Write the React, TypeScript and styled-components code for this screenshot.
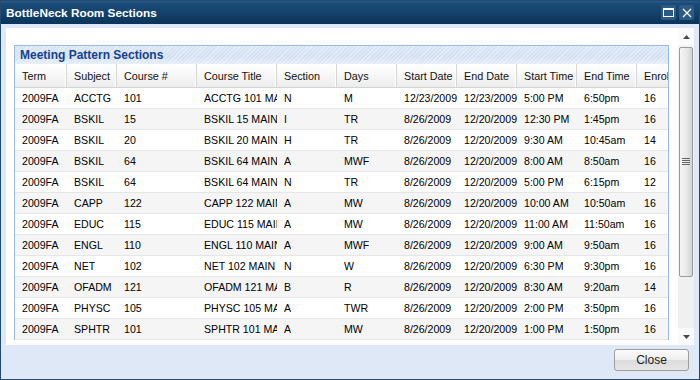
import React from "react";
import styled, { createGlobalStyle } from "styled-components";

const Global = createGlobalStyle`
  html, body { margin: 0; padding: 0; background: #ffffff; }
  body { font-family: "Liberation Sans", Arial, sans-serif; }
  * { box-sizing: border-box; }
`;

const Window = styled.div`
  width: 700px;
  height: 380px;
  border: 1px solid #254a70;
  background: #dfe8f6;
  display: flex;
  flex-direction: column;
  overflow: hidden;
`;

const TitleBar = styled.div`
  height: 23px;
  flex: none;
  background: linear-gradient(#2b5a89 0px, #1a4a77 3px, #15426c 12px, #0e395f 18px, #0b345a 23px);
  display: flex;
  align-items: center;
  justify-content: space-between;
  padding: 0 5px 0 5px;
`;

const Title = styled.div`
  color: #ffffff;
  font-weight: bold;
  font-size: 11.8px;
`;

const Tools = styled.div`
  display: flex;
  gap: 3px;
`;

const ToolButton = styled.div`
  width: 15px;
  height: 15px;
  border-radius: 2px;
  background: #2d5985;
  display: flex;
  align-items: center;
  justify-content: center;
`;

const Body = styled.div`
  margin: 4px 5px 0 5px;
  height: 317px;
  flex: none;
  background: #ffffff;
  display: flex;
`;

const Scroller = styled.div`
  flex: 1;
  overflow: hidden;
  padding: 17px 0 0 8px;
`;

const ScrollBar = styled.div`
  width: 16px;
  flex: none;
  background: #f3f3f3;
  display: flex;
  flex-direction: column;
  align-items: stretch;
`;

const Arrow = styled.div`
  height: 17px;
  flex: none;
  display: flex;
  align-items: center;
  justify-content: center;
  background: #fafafa;
`;

const Thumb = styled.div`
  margin: 2px 1px 0 1px;
  height: 230px;
  border: 1px solid #9a9a9a;
  border-radius: 2px;
  background: linear-gradient(90deg, #f4f4f4 0%, #e9e9e9 55%, #d2d2d2 100%);
  display: flex;
  align-items: center;
  justify-content: center;
`;

const Track = styled.div`
  flex: 1;
  background: #f0f0f0;
`;

const Panel = styled.div`
  width: 655px;
  border: 1px solid #99bbe8;
  border-bottom: none;
`;

const PanelHeader = styled.div`
  height: 18px;
  padding: 0 0 0 5px;
  display: flex;
  align-items: center;
  font-size: 12px;
  font-weight: bold;
  color: #15428b;
  background:
    repeating-linear-gradient(135deg, rgba(255,255,255,0.35) 0px, rgba(255,255,255,0.35) 1px, transparent 1px, transparent 3px),
    linear-gradient(#dae6f4 0%, #d3e1f1 60%, #e4edf8 100%);
`;

const Grid = styled.div`
  display: grid;
  grid-template-columns: 52px 50px 80px 80px 60px 60px 60px 60px 60px 60px 60px;
  width: 653px;
  overflow: hidden;
  color: #000000;
`;

const HeadCell = styled.div`
  height: 24px;
  display: flex;
  align-items: center;
  padding-left: 7px;
  white-space: nowrap;
  overflow: hidden;
  font-size: 10.8px;
  color: #111;
  background: linear-gradient(#ffffff 0%, #f7f7f7 50%, #ececec 100%);
  border-right: 1px solid #d6d6d6;
  box-shadow: inset -1px 0 0 #ffffff;
  border-bottom: 1px solid #d3d3d3;
`;

const Cell = styled.div<{ $alt: boolean }>`
  height: 21px;
  display: flex;
  align-items: center;
  padding: 0 0 0 7px;
  white-space: nowrap;
  overflow: hidden;
  font-size: 10.6px;
  background: ${(p) => (p.$alt ? "#f5f5f5" : "#ffffff")};
  border-bottom: 1px solid #e6e6e6;
`;

const CellText = styled.span`
  display: block;
  overflow: hidden;
  max-width: 100%;
`;

const CloseButton = styled.button`
  width: 75px;
  height: 22px;
  border: 1px solid #9d9d9d;
  border-radius: 3px;
  background: linear-gradient(#fbfbfb 0%, #eeeeee 50%, #dcdcdc 51%, #e6e6e6 100%);
  font-family: "Liberation Sans", Arial, sans-serif;
  font-size: 12px;
  color: #222;
  padding: 0;
`;

const Footer = styled.div`
  flex: 1;
  display: flex;
  justify-content: flex-end;
  align-items: flex-start;
  padding: 4px 10px 0 0;
`;

const columns = ["Term", "Subject", "Course #", "Course Title", "Section", "Days", "Start Date", "End Date", "Start Time", "End Time", "Enroll"];

const rows: string[][] = [
  ["2009FA", "ACCTG", "101", "ACCTG 101 MAIN", "N", "M", "12/23/2009", "12/23/2009", "5:00 PM", "6:50pm", "16"],
  ["2009FA", "BSKIL", "15", "BSKIL 15 MAIN", "I", "TR", "8/26/2009", "12/20/2009", "12:30 PM", "1:45pm", "16"],
  ["2009FA", "BSKIL", "20", "BSKIL 20 MAIN", "H", "TR", "8/26/2009", "12/20/2009", "9:30 AM", "10:45am", "14"],
  ["2009FA", "BSKIL", "64", "BSKIL 64 MAIN", "A", "MWF", "8/26/2009", "12/20/2009", "8:00 AM", "8:50am", "16"],
  ["2009FA", "BSKIL", "64", "BSKIL 64 MAIN", "N", "TR", "8/26/2009", "12/20/2009", "5:00 PM", "6:15pm", "12"],
  ["2009FA", "CAPP", "122", "CAPP 122 MAIN", "A", "MW", "8/26/2009", "12/20/2009", "10:00 AM", "10:50am", "16"],
  ["2009FA", "EDUC", "115", "EDUC 115 MAIN", "A", "MW", "8/26/2009", "12/20/2009", "11:00 AM", "11:50am", "16"],
  ["2009FA", "ENGL", "110", "ENGL 110 MAIN", "A", "MWF", "8/26/2009", "12/20/2009", "9:00 AM", "9:50am", "16"],
  ["2009FA", "NET", "102", "NET 102 MAIN", "N", "W", "8/26/2009", "12/20/2009", "6:30 PM", "9:30pm", "16"],
  ["2009FA", "OFADM", "121", "OFADM 121 MAIN", "B", "R", "8/26/2009", "12/20/2009", "8:30 AM", "9:20am", "14"],
  ["2009FA", "PHYSC", "105", "PHYSC 105 MAIN", "A", "TWR", "8/26/2009", "12/20/2009", "2:00 PM", "3:50pm", "16"],
  ["2009FA", "SPHTR", "101", "SPHTR 101 MAIN", "A", "MW", "8/26/2009", "12/20/2009", "1:00 PM", "1:50pm", "16"],
];

export default function App() {
  return (
    <>
      <Global />
      <Window>
        <TitleBar>
          <Title>BottleNeck Room Sections</Title>
          <Tools>
            <ToolButton>
              <svg width="11" height="9" viewBox="0 0 11 9">
                <rect x="0.5" y="0.5" width="10" height="8" fill="none" stroke="#fff" strokeWidth="1" />
                <rect x="0.5" y="0.5" width="10" height="1.5" fill="#fff" />
              </svg>
            </ToolButton>
            <ToolButton>
              <svg width="10" height="10" viewBox="0 0 10 10">
                <path d="M1 1 L9 9 M9 1 L1 9" stroke="#fff" strokeWidth="1.3" />
              </svg>
            </ToolButton>
          </Tools>
        </TitleBar>
        <Body>
          <Scroller>
            <Panel>
              <PanelHeader>Meeting Pattern Sections</PanelHeader>
              <Grid>
                {columns.map((c) => (
                  <HeadCell key={c}>{c}</HeadCell>
                ))}
                {rows.map((r, i) =>
                  r.map((v, j) => (
                    <Cell key={`${i}-${j}`} $alt={i % 2 === 1}>
                      <CellText>{v}</CellText>
                    </Cell>
                  ))
                )}
              </Grid>
            </Panel>
          </Scroller>
          <ScrollBar>
            <Arrow>
              <svg width="7" height="4" viewBox="0 0 7 4">
                <path d="M0 4 L3.5 0 L7 4 Z" fill="#4a4a4a" />
              </svg>
            </Arrow>
            <Thumb>
              <svg width="8" height="8" viewBox="0 0 8 8">
                <path d="M0 0.5 H8 M0 2.5 H8 M0 4.5 H8 M0 6.5 H8" stroke="#666" strokeWidth="1" />
              </svg>
            </Thumb>
            <Track />
            <Arrow>
              <svg width="7" height="4" viewBox="0 0 7 4">
                <path d="M0 0 L7 0 L3.5 4 Z" fill="#4a4a4a" />
              </svg>
            </Arrow>
          </ScrollBar>
        </Body>
        <Footer>
          <CloseButton>Close</CloseButton>
        </Footer>
      </Window>
    </>
  );
}
